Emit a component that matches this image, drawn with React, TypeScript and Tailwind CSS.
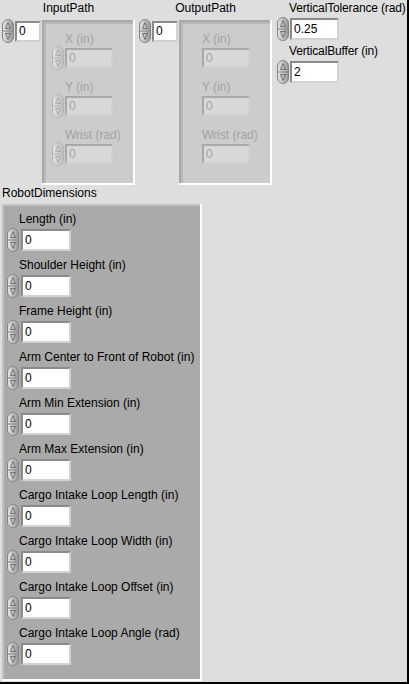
import type { ReactNode } from "react";

const FONT = "font-['Liberation_Sans',Arial,sans-serif] text-[12px] leading-[15px]";

function Spinner({ disabled, hidden }: { disabled?: boolean; hidden?: boolean }) {
  const id = disabled ? "spinDis" : "spinOn";
  const edge = disabled ? "#b4b4b4" : "#868686";
  const arrow = disabled ? "#a8a8a8" : "#6a6a6a";
  return (
    <svg width="12" height="24" viewBox="0 0 12 24" className={`shrink-0 ${hidden ? "invisible" : ""}`}>
      <defs>
        <linearGradient id={id} x1="0" y1="0" x2="1" y2="0">
          <stop offset="0" stopColor={disabled ? "#e4e4e4" : "#e6e6e6"} />
          <stop offset="0.45" stopColor={disabled ? "#d2d2d2" : "#c4c4c4"} />
          <stop offset="1" stopColor={disabled ? "#bcbcbc" : "#949494"} />
        </linearGradient>
      </defs>
      <rect x="0.5" y="0.5" width="11" height="23" rx="5.5" fill={`url(#${id})`} stroke={edge} />
      <line x1="1" y1="12" x2="11" y2="12" stroke={edge} />
      <path d="M6 3.5 L3.5 9.5 H8.5 Z" fill="none" stroke={arrow} strokeWidth="0.9" />
      <path d="M6 20.5 L3.5 14.5 H8.5 Z" fill="none" stroke={arrow} strokeWidth="0.9" />
    </svg>
  );
}

function Box({ value, w, h, dim }: { value: string; w: string; h: string; dim?: boolean }) {
  return (
    <div
      className={`${w} ${h} flex items-center pl-[2px] border-t-2 border-l-2 border-b-2 border-r-2 ${
        dim
          ? "bg-[#d8d8d8] border-t-[#a9a9a9] border-l-[#a9a9a9] border-b-[#d0d0d0] border-r-[#d0d0d0] text-[#a4a4a4]"
          : "bg-white border-t-[#8a8a8a] border-l-[#8a8a8a] border-b-[#d2d2d2] border-r-[#d2d2d2] text-black"
      }`}
    >
      {value}
    </div>
  );
}

function PathCluster({ showSpin }: { showSpin: boolean }) {
  const items = ["X (in)", "Y (in)", "Wrist (rad)"];
  return (
    <div className="mt-px w-[93px] h-[165px] border-r-2 border-b-2 border-white">
      <div className="h-full border-t-2 border-l-2 border-[#a9a9a9]">
        <div className="h-full bg-[#cccccc] border-t-2 border-l-2 border-[#b9b9b9] pt-[8px] pl-[6px] flex flex-col gap-[12px]">
          {items.map((label) => (
            <div key={label} className="flex flex-col">
              <div className="pl-[13px] text-[#a2a2a2]">{label}</div>
              <div className="mt-px flex items-center gap-px">
                <div className="my-[-2px]">
                  <Spinner disabled hidden={!showSpin} />
                </div>
                <Box value="0" w="w-[48px]" h="h-[20px]" dim />
              </div>
            </div>
          ))}
        </div>
      </div>
    </div>
  );
}

function PathArray({ label, showSpin }: { label: string; showSpin: boolean }) {
  return (
    <div className="flex flex-col">
      <div className="pt-px h-[16px] text-center">{label}</div>
      <div className="mt-[3px] flex items-start">
        <Spinner />
        <div className="ml-px mt-[2px]">
          <Box value="0" w="w-[26px]" h="h-[21px]" />
        </div>
        <div className="ml-px">
          <PathCluster showSpin={showSpin} />
        </div>
      </div>
    </div>
  );
}

function Scalar({ label, value, children }: { label: string; value: string; children?: ReactNode }) {
  return (
    <div className="flex flex-col">
      <div className="pl-[12px] h-[15px] whitespace-nowrap tracking-[-0.15px]">{label}</div>
      <div className="mt-px flex items-start">
        <Spinner />
        <div className="ml-px mt-px">
          <Box value={value} w="w-[49px]" h="h-[22px]" />
        </div>
      </div>
      {children}
    </div>
  );
}

const DIMENSIONS = [
  "Length (in)",
  "Shoulder Height (in)",
  "Frame Height (in)",
  "Arm Center to Front of Robot (in)",
  "Arm Min Extension (in)",
  "Arm Max Extension (in)",
  "Cargo Intake Loop Length (in)",
  "Cargo Intake Loop Width (in)",
  "Cargo Intake Loop Offset (in)",
  "Cargo Intake Loop Angle (rad)",
];

export default function App() {
  return (
    <div className={`w-[409px] h-[684px] overflow-hidden bg-[#dedede] border-r-2 border-b-2 border-black text-black ${FONT}`}>
      <div className="flex items-start pl-[2px]">
        <PathArray label="InputPath" showSpin />
        <div className="ml-[4px]">
          <PathArray label="OutputPath" showSpin={false} />
        </div>
        <div className="ml-[5px] pt-px flex flex-col">
          <Scalar label="VerticalTolerance (rad)" value="0.25" />
          <div className="mt-[3px]">
            <Scalar label="VerticalBuffer (in)" value="2" />
          </div>
        </div>
      </div>

      <div className="mt-[1px] pl-[2px] h-[15px]">RobotDimensions</div>
      <div className="ml-[2px] mt-[3px] w-[200px] h-[477px] border-r-2 border-b-2 border-white">
        <div className="h-full bg-[#aaaaaa] border-t-2 border-l-2 border-[#c2c2c2] pt-[6px] flex flex-col gap-[6px]">
          {DIMENSIONS.map((label) => (
            <div key={label} className="flex flex-col">
              <div className="pl-[15px] h-[15px] whitespace-nowrap">{label}</div>
              <div className="mt-[1px] pl-[3px] flex items-start">
                <Spinner />
                <div className="ml-[2px] mt-px">
                  <Box value="0" w="w-[50px]" h="h-[22px]" />
                </div>
              </div>
            </div>
          ))}
        </div>
      </div>
    </div>
  );
}
